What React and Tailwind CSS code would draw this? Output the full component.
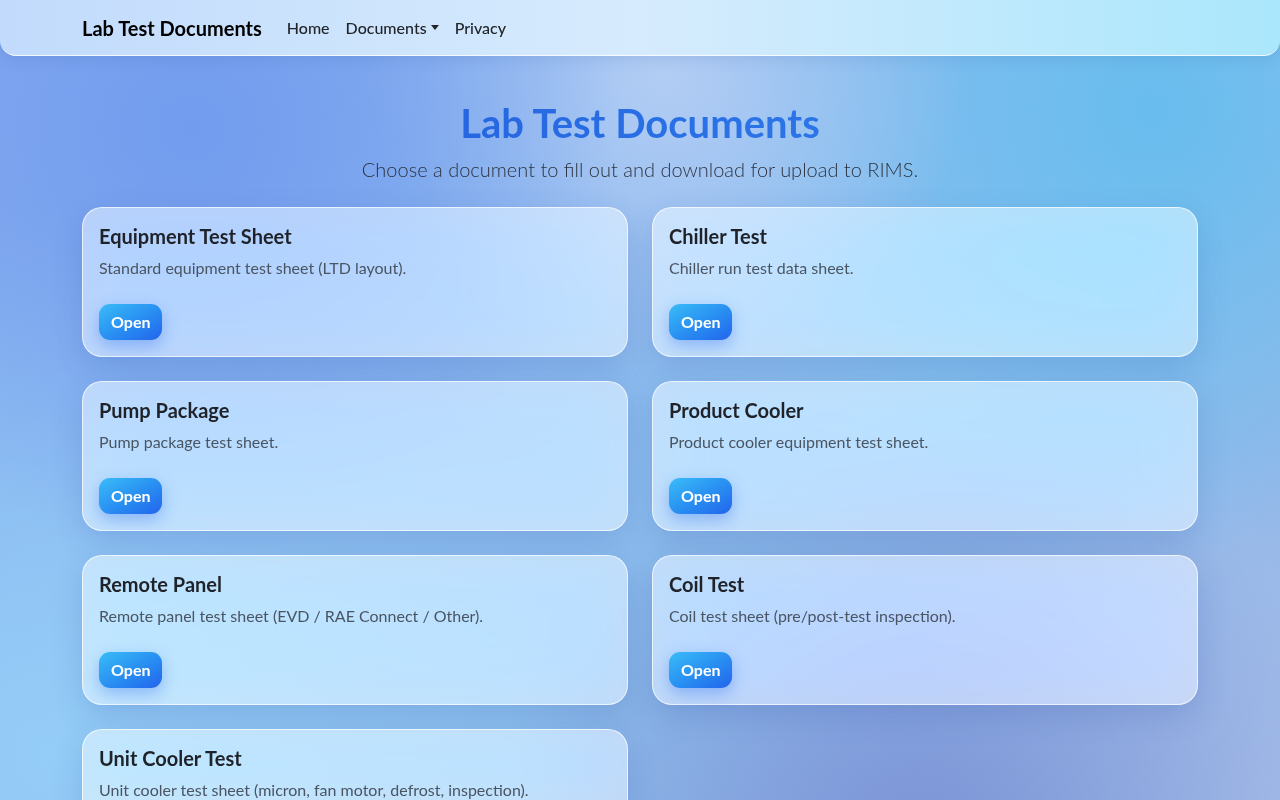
const documents = [
  { title: 'Equipment Test Sheet', text: 'Standard equipment test sheet (LTD layout).' },
  { title: 'Chiller Test', text: 'Chiller run test data sheet.' },
  { title: 'Pump Package', text: 'Pump package test sheet.' },
  { title: 'Product Cooler', text: 'Product cooler equipment test sheet.' },
  { title: 'Remote Panel', text: 'Remote panel test sheet (EVD / RAE Connect / Other).' },
  { title: 'Coil Test', text: 'Coil test sheet (pre/post-test inspection).' },
  { title: 'Unit Cooler Test', text: 'Unit cooler test sheet (micron, fan motor, defrost, inspection).' },
];

function DocCard({ title, text }) {
  return (
    <div className="rounded-[20px] border border-white/70 bg-white/50 p-4 shadow-[0_10px_30px_rgba(40,70,160,0.18)] backdrop-blur-xl backdrop-saturate-150">
      <h5 className="mb-2 text-[20px] font-bold leading-6 text-[#1f2329]">{title}</h5>
      <p className="mb-6 text-base leading-6 text-[#4a5563]">{text}</p>
      <button className="h-9 rounded-[11px] bg-gradient-to-br from-[#3bbcf7] to-[#2563eb] px-3 text-base font-bold text-white shadow-[0_6px_16px_rgba(37,99,235,0.35)]">
        Open
      </button>
    </div>
  );
}

export default function App() {
  return (
    <div className="min-h-screen font-['Lato','Segoe_UI',sans-serif] text-[#212529] [background-color:#8fb2ec] [background-image:radial-gradient(circle_at_15%_14%,#729cee_0,transparent_32%),radial-gradient(circle_at_52%_8%,#b2cdf4_0,transparent_28%),radial-gradient(circle_at_90%_12%,#68bdee_0,transparent_32%),radial-gradient(circle_at_4%_82%,#94cdf7_0,transparent_38%),radial-gradient(circle_at_72%_92%,#7c94d6_0,transparent_35%),radial-gradient(circle_at_100%_100%,#aac2ea_0,transparent_30%),linear-gradient(135deg,#86aaef,#8dc0ee_60%,#9ab0e4)]">
      <nav className="h-14 rounded-b-2xl border-b border-white/80 bg-gradient-to-r from-[#c2dbfc] via-[#d6ebfd] to-[#aae7fc] shadow-[0_4px_14px_rgba(40,80,160,0.12)]">
        <div className="mx-auto flex h-full max-w-[1140px] items-center px-3">
          <a className="mr-[17px] text-[20px] font-bold text-black">Lab Test Documents</a>
          <ul className="flex items-center text-base font-medium text-[#212529]">
            <li className="px-2">Home</li>
            <li className="flex items-center px-2">
              Documents
              <span className="ml-1 inline-block h-0 w-0 border-x-[4px] border-t-[5px] border-x-transparent border-t-[#212529]" />
            </li>
            <li className="px-2">Privacy</li>
          </ul>
        </div>
      </nav>

      <main className="mx-auto max-w-[1140px] px-3 pb-10 pt-[43px]">
        <h1 className="bg-gradient-to-r from-[#2257d9] to-[#3284f0] bg-clip-text text-center text-[40px] font-bold leading-[48px] text-transparent">
          Lab Test Documents
        </h1>
        <p className="mt-[7px] text-center text-[20px] font-light leading-[30px] text-[#2b3340]">
          Choose a document to fill out and download for upload to RIMS.
        </p>
        <div className="mt-[23px] grid grid-cols-2 gap-6">
          {documents.map((d) => (
            <DocCard key={d.title} title={d.title} text={d.text} />
          ))}
        </div>
      </main>
    </div>
  );
}
